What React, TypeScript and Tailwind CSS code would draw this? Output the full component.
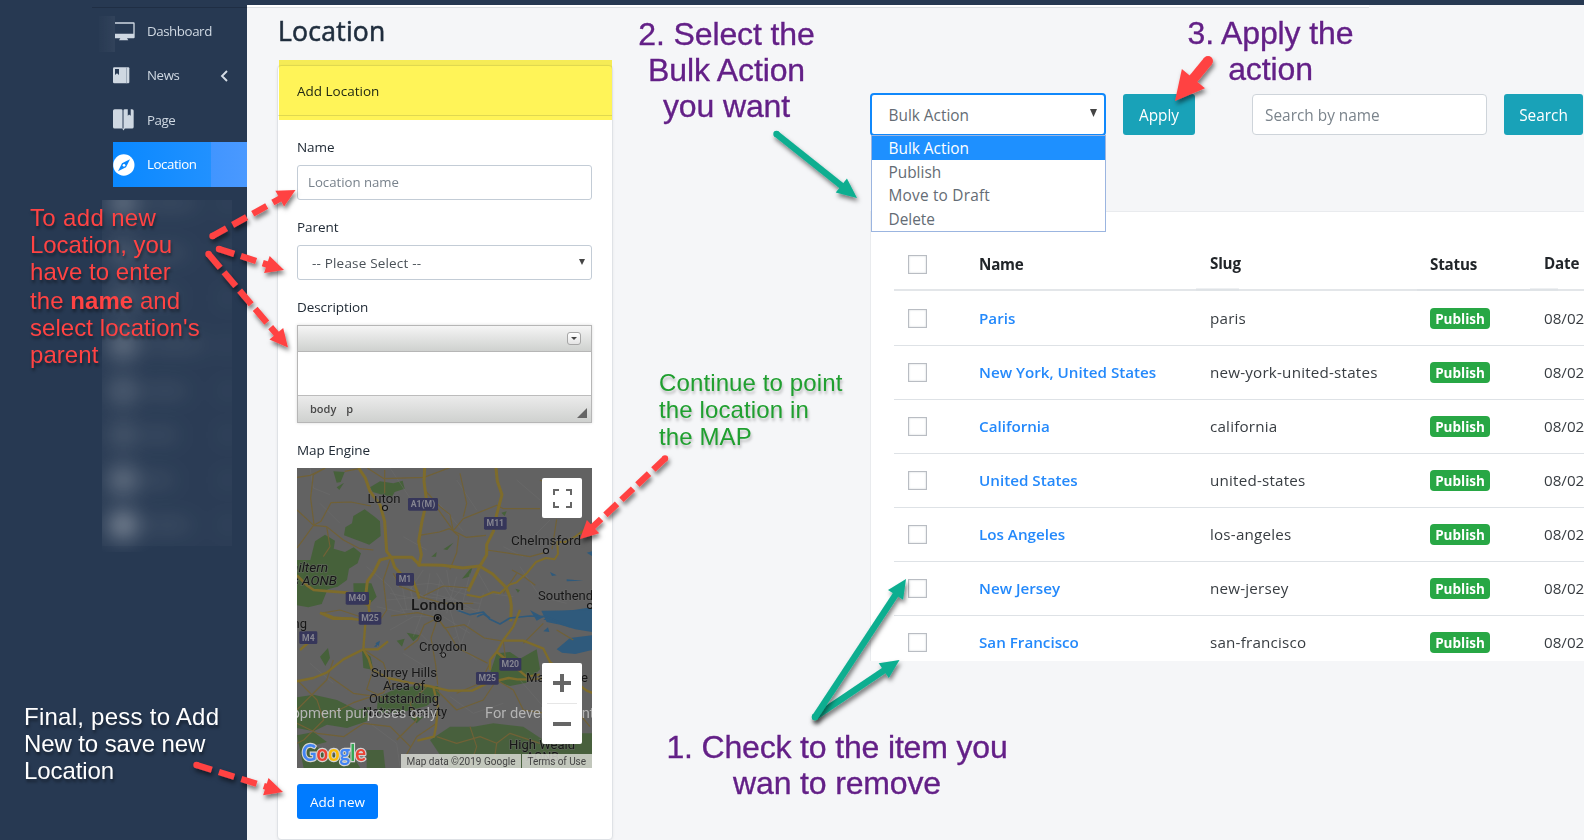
import React from "react";

const rows = [
  ["Paris", "paris"],
  ["New York, United States", "new-york-united-states"],
  ["California", "california"],
  ["United States", "united-states"],
  ["Los Angeles", "los-angeles"],
  ["New Jersey", "new-jersey"],
  ["San Francisco", "san-francisco"],
];

const blobs = [
  [123, 203, 0.26, 60],
  [123, 253, 0.13, 50],
  [123, 298, 0.12, 40],
  [123, 345, 0.26, 70],
  [123, 391, 0.17, 50],
  [123, 435, 0.12, 40],
  [123, 480, 0.26, 36],
  [123, 525, 0.36, 54],
];

type ArrowProps = {
  from: [number, number];
  to: [number, number];
  color: string;
  width?: number;
  dash?: string;
  head?: number;
  spread?: number;
};

function Arrow({ from, to, color, width = 6.4, dash, head = 18, spread = 9 }: ArrowProps) {
  const dx = to[0] - from[0];
  const dy = to[1] - from[1];
  const len = Math.hypot(dx, dy);
  const ux = dx / len;
  const uy = dy / len;
  const bx = to[0] - ux * head;
  const by = to[1] - uy * head;
  const ex = bx + ux * 3;
  const ey = by + uy * 3;
  return (
    <g filter="url(#drop)">
      <circle cx={from[0]} cy={from[1]} r={width / 2} fill={color} />
      <line x1={from[0]} y1={from[1]} x2={ex} y2={ey} stroke={color} strokeWidth={width} strokeDasharray={dash} />
      <polygon
        fill={color}
        points={`${to[0]},${to[1]} ${bx - uy * spread},${by + ux * spread} ${bx + uy * spread},${by - ux * spread}`}
      />
    </g>
  );
}

function Badge({ x, y, w, t }: { x: number; y: number; w: number; t: string }) {
  return (
    <g>
      <rect x={x} y={y} width={w} height={38} rx={4} fill="#36365a" />
      <text x={x + w / 2} y={y + 28} textAnchor="middle" fontSize={26} fontWeight={700} fill="#858590">
        {t}
      </text>
    </g>
  );
}

function MapView() {
  return (
    <svg className="block h-[300px] w-[295px]" viewBox="0 0 295 300" fontFamily="Roboto, sans-serif">
      <rect width="295" height="300" fill="#626262" />
      {/* north half */}
      <g transform="translate(-7 -8) scale(.33333)" fill="none" strokeLinejoin="round">
        <g fill="#46613a">
          <path d="M240 82l30-18 40 6 28-8 6 24-30 10-8 14-24-4-34-10z" />
          <path d="M190 168l34-20 30 22 16 14 2 44-34 26-44-16-32-12 4-24 20-12z" />
          <path d="M21 300l40 0 14-56 30-20 30 18-4 24 34 10 26-14 22 18-10 30-26 16-6 34-28 20-30 8-18 44-40 10-34-6z" />
          <path d="M190 370l54 0 16 40-24 24-44-6z M130 34l34 2-12 30-12 2z M140 82l22-14-14 22z M460 268l30-20-18 22z M424 290l16-14-2 14z M516 356l34-40-12 34z M634 158l16-4-6 14z M676 386l14 4-6 8z" />
        </g>
        <g fill="#2f5a7c">
          <path d="M760 480l30-24 60-6 56-8v38z M780 336l20 10-14 2z M830 358l50 4-50 2z M890 278l16-4v14z" />
          <path d="M560 470l20-8 20 12" stroke="#2f5a7c" strokeWidth="5" fill="none" />
        </g>
        <g stroke="#6e6e6e" strokeWidth="1.5">
          <path d="M60 24l10 60 50 20 M300 24l60 90 90 20 70 80 M230 320l70 60 50 90 M400 330l-40 60 20 60 M440 340l60 100 M470 330l10 60 70 20 M520 380l-60 70 M560 330l40 70 70 10 M690 320l60 90 80 20 M780 180l-60 60 M640 260l60 30 M90 130l60 60 M340 230l70 40 M300 400l90 20 M480 410l90 50 M260 440l90 20 M310 350l120 80 M420 400l80 20 M680 60l70 60 M500 60l60 90" />
          <path d="M330 340l20 110 M360 340l10 120 M420 340l-20 110 M450 360l-20 110 M500 350l-30 110 M540 340l-30 120 M580 400l-20 70 M290 420l120-10 160 20 M320 380l100-10 120 20 M330 450l120-10 120 10" />
        </g>
        <g stroke="#716136" strokeWidth="3.5">
          <path d="M21 52l40-6 40-20 M164 34l44-8 M21 150l50 46 22-12 30-56 60-2 60 12 M70 196l40 4 50 40 50 26 40 4 M106 24l-36 20-8 70 10 80-36 50-15 20 M232 24l50 32 120-4 80-30 M284 30l0 70 M404 90l46 50 30 24 10 50 16 14-6 50-20 50 M490 212l30-36 100-40 20 10 110 0 M388 226l60-10 30-10 50 26 60-6 M590 270l70 10 60 10 44-12 M666 330l30 16 40 30 M750 60l46 22-10 30 M800 178l-14 90 M856 230l50-30 M390 400l-60-20-20-40 M400 408l60-30 80 6 M390 410l70 20 90 0 M300 300l-20 60 10 90-20 30 M90 460l60-10 90 30 M110 200l10 60-20 30 M490 212l-50-70 M510 40l20 90-10 40 M640 400l40-60" />
        </g>
        <g stroke="#7e6c2b" strokeWidth="9">
          <path d="M206 24l20 30 14 40 30 40 14 50 6 90 14 18 10 30 24 26" />
          <path d="M404 24l-2 40 8 60-14 60-10 60 8 40-8 36" />
          <path d="M618 24l4 40 14 40-16 60-10 50-20 40 0 30-20 34-36 76" />
          <path d="M228 400l4-36 20-28 18-36 30-8 66 0 22 22 70 2 60 8 50-6 40 24 40 40 12 30 4 26-2 46" />
          <path d="M21 346l30 30 20 14 50 4 50 4 40 28 26 10" strokeWidth="8" />
          <path d="M364 350l16 40 8 26" strokeWidth="8" />
          <path d="M530 404l40 8 40-16 20 4 28-26 20-6 34-30 26-32 30-12 26 4 10-16-2-36 24 0 30-16 40-30" strokeWidth="6" />
          <path d="M90 458l40 18 60 0" strokeWidth="8" />
          <path d="M240 420l-4 20 6 40" strokeWidth="8" />
        </g>
        <Badge x={354} y={114} w={90} t="A1(M)" />
        <Badge x={582} y={171} w={68} t="M11" />
        <Badge x={318} y={339} w={54} t="M1" />
        <Badge x={167} y={396} w={70} t="M40" />
      </g>
      {/* south half */}
      <g transform="translate(-7 142) scale(.33333)" fill="none" strokeLinejoin="round">
        <g fill="#46613a">
          <path d="M90 140l24-26 6 30-14 24z M216 120l26 20 8 40-30-6z M320 92l24-6-8 24z M350 68l40 8-20 18z M600 190l20-60 40-4 30 20 50-28 10 60-40 40-50 10-60-20z" />
          <path d="M264 262l50-24 60-10 70 0 6 30-40 30-80 20-70 0z M360 320l40 0-20 20z" />
          <path d="M21 262l50-8 70 16 60 30 40-10-10 44-60 20-60-10-40 20-50-10z M21 376l50-10 40 30-40 10 50 30 60-10 30 48-170 0z" />
          <path d="M420 390l60-40 70 0 60-10 90 10 60 40 100-20 46 0 0 104-430 0z M230 420l50 0 6 54-56 0z" opacity=".9" />
        </g>
        <g fill="#2f5a7c">
          <path d="M906 0v66l-50-8-46-14-40-8-16-34z M720 0l40 22-20 10z" />
          <path d="M800 118l40-34 66-8v44l-50 12-40-4z M760 64l14-12 4 14z M256 100l14-8-4 16z M252 110l12-12-4 12z" />
          <path d="M500 0l40 14 40-8 20 22 30 14 30-18 60-6 50 2 70 30" stroke="#2f5a7c" strokeWidth="5" fill="none" />
        </g>
        <g stroke="#6d6d6d" strokeWidth="1.5">
          <path d="M300 60l70-40 90 0 80 50 M380 60l60 60 60-40 M400 0l-30 80 M480 0l30 100-60 40 M540 30l-30 80 50 40 M60 160l70 60 M240 340l80 60 10 70 M480 260l70 50 90-30 M690 210l70 80 M340 130l100 60" />
        </g>
        <g stroke="#716136" strokeWidth="3.5">
          <path d="M443 24l-40 20-20 46-40 30 M443 24l20 30 60-10 60 40 60 10 M443 24l-60-16-80 10 M443 24l30 40 30 50 90 46 M443 24l-20 60 14 80 6 60 M220 118l60 40 20 60-20 30-90 30-60 30 M220 118l30 60-20 60 60 30 M21 210l60 60 20 60-60 60-20 10 M120 200l70 50 70 10 M410 230l-50 50 20 50-60 60 M440 240l60 60 80-30 40-60 50 30 30 60 70 10 60-30 M600 160l-30 60-70 30 M440 340l-60 40-40 70 M440 380l60 20 70-20 50 20 40-30 90 30 M540 350l20 60-20 60 M620 400l-10 70 M860 240l-10 50 50 60 M320 220l-40 20 M21 340l60 30 80 10 60-40 80 10 60 60 M130 150l-20 60-90 90 M800 60l50 30 M700 100l60-60 M640 94l10 80" />
        </g>
        <g stroke="#7e6c2b" strokeWidth="9">
          <path d="M100 10l30 12 70 6 50 10" strokeWidth="7" />
          <path d="M226 40l-6 78-60 30-50 40-40 16-50 10 M220 118l44 0 30-24 M30 120l50-44" strokeWidth="7" />
          <path d="M220 118l16 28 10 34 50 24 60 14 60 10 60 14 70 0 50-24 60-14 26 4 40 0 100-8" strokeWidth="7" />
          <path d="M690 0l-20 50-30 40-20 36-20 24 0 30 M640 92l60 0 60 24 20 40 50 40 60 46 20 8 M430 230l14 60-6 60-6 30-50 12 M620 126l30 24 60 50 40-6" strokeWidth="7" />
        </g>
        <Badge x={206} y={6} w={68} t="M25" />
        <Badge x={28} y={64} w={54} t="M4" />
        <Badge x={628} y={144} w={66} t="M20" />
        <Badge x={558} y={186} w={68} t="M25" />
        <g stroke="#111" strokeWidth="4">
          <circle cx="443" cy="24" r="10" fill="#777" />
          <circle cx="443" cy="24" r="4" fill="#111" />
          <circle cx="460" cy="135" r="7" strokeWidth="3" fill="#777" />
        </g>
      </g>
      <g fill="#171717" fontSize="13.3" stroke="#6a6a6a" strokeWidth="1.4" paintOrder="stroke" strokeOpacity=".6">
        <text x="70.5" y="35" textLength="33" lengthAdjust="spacingAndGlyphs">Luton</text>
        <text x="214" y="76.5" textLength="70" lengthAdjust="spacingAndGlyphs">Chelmsford</text>
        <text x="-14.5" y="104" textLength="45.5" fontStyle="italic" fontSize="12.500" lengthAdjust="spacingAndGlyphs">Chiltern</text>
        <text x="-24" y="117" textLength="64" fontStyle="italic" fontSize="12.500" lengthAdjust="spacingAndGlyphs">Hills AONB</text>
        <text x="241" y="131.5" fontSize="13">Southend</text>
        <text x="114" y="142" fontSize="15.5" fontWeight="500" textLength="53" lengthAdjust="spacingAndGlyphs">London</text>
        <text x="-37" y="160" fontSize="13">Reading</text>
        <text x="122" y="183" textLength="48" lengthAdjust="spacingAndGlyphs">Croydon</text>
        <text x="74" y="208.5" textLength="66" lengthAdjust="spacingAndGlyphs">Surrey Hills</text>
        <text x="86" y="221.5" textLength="42" lengthAdjust="spacingAndGlyphs">Area of</text>
        <text x="72" y="235" textLength="70" lengthAdjust="spacingAndGlyphs">Outstanding</text>
        <text x="66" y="248" textLength="84" lengthAdjust="spacingAndGlyphs">Natural Beauty</text>
        <text x="229" y="213.5" textLength="62" lengthAdjust="spacingAndGlyphs">Maidstone</text>
        <text x="212" y="281" textLength="66" lengthAdjust="spacingAndGlyphs">High Weald</text>
        <text x="229" y="293" textLength="33" lengthAdjust="spacingAndGlyphs">AONB</text>
      </g>
      <g fill="#777" stroke="#111" strokeWidth="1.1">
        <circle cx="88" cy="40" r="2.5" />
        <circle cx="249" cy="83" r="2.5" />
        <circle cx="293" cy="138" r="2.5" />
      </g>
      <g fill="#b4b4b4" fontSize="14.500">
        <text x="-65" y="250" textLength="205" lengthAdjust="spacingAndGlyphs">For development purposes only</text>
        <text x="188" y="250" textLength="205" lengthAdjust="spacingAndGlyphs">For development purposes only</text>
      </g>
      <text x="5" y="293" fontFamily="Lato, sans-serif" fontSize="22.500" fontWeight="700" textLength="64" lengthAdjust="spacingAndGlyphs" stroke="#d4d4d4" strokeWidth="2.4" paintOrder="stroke">
        <tspan fill="#4285f4">G</tspan>
        <tspan fill="#ea4335">o</tspan>
        <tspan fill="#fbbc05">o</tspan>
        <tspan fill="#4285f4">g</tspan>
        <tspan fill="#34a853">l</tspan>
        <tspan fill="#ea4335">e</tspan>
      </text>
      <rect x="104" y="286" width="120" height="14" fill="#d6d8d2" opacity=".86" />
      <rect x="225" y="286" width="70" height="14" fill="#d6d8d2" opacity=".86" />
      <g fill="#444" fontSize="10">
        <text x="109.5" y="296.5" textLength="109" lengthAdjust="spacing">Map data ©2019 Google</text>
        <text x="230.5" y="296.5" textLength="58.5" lengthAdjust="spacing">Terms of Use</text>
      </g>
      <rect x="245" y="10" width="40" height="40" rx="2" fill="#fff" />
      <path d="M257 27v-5h5 M269 22h5v5 M274 34v5h-5 M262 39h-5v-5" fill="none" stroke="#666" strokeWidth="2" />
      <rect x="245" y="195" width="40" height="81" rx="2" fill="#fff" />
      <path d="M256 215h18 M265 206v18 M256 256h18" stroke="#666" strokeWidth="4" />
      <path d="M250 235.5h30" stroke="#e6e6e6" />
    </svg>
  );
}

function NavItem({ icon, label, active, chevron }: { icon: React.ReactNode; label: string; active?: boolean; chevron?: boolean }) {
  return (
    <div
      className={
        active
          ? "flex h-[45px] items-center bg-[linear-gradient(90deg,#0988ff_0%,#2191ff_73%,#4195ff_73%,#4a99ff_100%)] text-white"
          : "flex h-[44.4px] items-center text-[#cfd8e2]"
      }
    >
      <div className="w-[34px] shrink-0">{icon}</div>
      <span className="pt-px text-[13.3px] tracking-[-0.42px]">{label}</span>
      {chevron && (
        <svg className="mr-[19px] ml-auto h-[12px] w-[8px]" viewBox="0 0 8 12" fill="none" stroke="#d5dde6" strokeWidth="1.9">
          <path d="M7 1L2 6l5 5" />
        </svg>
      )}
    </div>
  );
}

function Label({ children }: { children: React.ReactNode }) {
  return <div className="mb-[7px] h-[21px] text-[13.5px] leading-[21px] tracking-[-0.07px] text-[#212b36]">{children}</div>;
}

function Check() {
  return <div className="ml-[14px] h-[19px] w-[19px] border border-[#b9bdc3] bg-white shadow-[inset_0_0_2px_#c8ccd0]" />;
}

export default function App() {
  return (
    <div className="relative flex h-[840px] w-[1584px] flex-col overflow-hidden bg-[#273952] font-['Open_Sans',sans-serif]">
      <div className="h-[5px] shrink-0" />
      <div className="flex min-h-0 flex-1">
        <aside className="w-[247px] shrink-0 pl-[92px]">
          <div className="mt-[2px] mb-px border-t border-[#1f2e44]" />
          <nav className="ml-[21px]">
            <NavItem
              label="Dashboard"
              icon={
                <svg className="h-[20px] w-[22px]" viewBox="339 62 66 60">
                  <path fill="#cfd8e2" fillRule="evenodd" d="M345 66h56q3 0 3 3v42q0 3-3 3h-56zM345 70v30h55v-30zM361 114h20l4 6h-28z" />
                </svg>
              }
            />
            <NavItem
              label="News"
              chevron
              icon={
                <svg className="h-[17px] w-[17px]" viewBox="339 203 51 51">
                  <path fill="#cfd8e2" d="M343 204h42q3 0 3 3v42q0 3-3 3h-42q-4 0-4-4v-40q0-4 4-4z" />
                  <path fill="#273952" d="M345 209h12v18l-6-5-6 5z" />
                  <path stroke="#8492a5" strokeWidth="2" d="M379.500 204v48" />
                </svg>
              }
            />
            <NavItem
              label="Page"
              icon={
                <svg className="h-[22px] w-[21px]" viewBox="339 327 64 66">
                  <path fill="#cfd8e2" d="M344 327h20q4 0 4 4v55h-24q-5 0-5-5v-49q0-5 5-5zM371 331q0-4 4-4h9v20l4-4 5 4v-20h4q5 0 5 5v49q0 5-5 5h-22l-4 6-4-6h4z" />
                </svg>
              }
            />
            <NavItem
              label="Location"
              active
              icon={
                <svg className="h-[22px] w-[22px]" viewBox="339 462 66 66">
                  <circle cx="371.500" cy="495" r="32" fill="#fff" />
                  <path fill="#0b88ff" d="M390 478l-12 24-24 12 12-24z" />
                  <circle cx="372" cy="496" r="4" fill="#fff" />
                </svg>
              }
            />
          </nav>
        </aside>

        <main className="flex min-w-0 flex-1 flex-col bg-[#f5f6f8]">
          <div className="h-[3px] w-[1122px] shrink-0 border-b border-[#dde0e4] bg-white" />
          <div className="flex min-h-0 flex-1">
            <section className="ml-[30px] w-[336px] shrink-0">
              <h1 className="h-[57px] pt-[4px] pl-px text-[26.500px] leading-[39px] font-medium tracking-[0.25px] text-[#1f2d3d] [-webkit-text-stroke:0.6px_#1f2d3d]">Location</h1>
              <div className="relative h-[775px] rounded-[4px] border border-[#dfe2e6] bg-white shadow-[0_1px_3px_rgba(0,0,0,0.06)]">
                <div className="flex h-[50px] items-center border-b border-[#dfe2e6] pt-px pl-[19px] text-[13.500px] text-[#212b36]">Add Location</div>
                <div className="absolute top-[-6px] left-[1px] h-[60px] w-[333px] bg-[#fff458] mix-blend-multiply" />
                <div className="pt-[21px] pr-[20px] pl-[19px]">
                  <Label>Name</Label>
                  <div className="mb-[17px] flex h-[35px] items-center rounded-[3px] border border-[#c3ccd6] px-[10px] pt-px text-[13.200px] text-[#78828c]">Location name</div>
                  <Label>Parent</Label>
                  <div className="mb-[17px] flex h-[35px] items-center justify-between rounded-[3px] border border-[#c3ccd6] pt-px pr-[6px] pl-[14px] text-[13.500px] tracking-[0.18px] text-[#495057]">
                    <span>-- Please Select --</span>
                    <svg className="mb-[3px] h-[6px] w-[6px]" viewBox="0 0 6 6"><path d="M0 0h6L3 6z" fill="#444" /></svg>
                  </div>
                  <Label>Description</Label>
                  <div className="mb-[17px] flex h-[98px] flex-col border border-[#b6b6b6] shadow-[0_0_3px_rgba(0,0,0,0.15)]">
                    <div className="flex h-[26px] items-center justify-end border-b border-[#b6b6b6] bg-linear-to-b from-[#f5f5f5] to-[#cfd1cf] pr-[10px]">
                      <div className="flex h-[13px] w-[14px] items-center justify-center rounded-[3px] border border-[#a6a6a6] bg-linear-to-b from-white to-[#e4e4e4]">
                        <svg className="h-[3px] w-[6px]" viewBox="0 0 6 3"><path d="M0 0h6L3 3z" fill="#444" /></svg>
                      </div>
                    </div>
                    <div className="flex-1 bg-white" />
                    <div className="flex h-[27px] items-center justify-between border-t border-[#bcbcbc] bg-linear-to-b from-[#ebebeb] to-[#cfd1cf] pr-[4px] pl-[12px] text-[11px] font-semibold text-[#484848]">
                      <span className="flex gap-[10px]"><span>body</span><span>p</span></span>
                      <svg className="mt-[8px] h-[10px] w-[10px]" viewBox="0 0 10 10"><path d="M10 0v10H0z" fill="#666" /></svg>
                    </div>
                  </div>
                  <Label>Map Engine</Label>
                  <MapView />
                  <button className="mt-[16px] flex h-[35px] w-[81px] items-center justify-center rounded-[3px] bg-[#007bff] pt-px text-[13.500px] text-white">Add new</button>
                </div>
              </div>
            </section>

            <section className="ml-[257px] flex min-w-0 flex-1 flex-col pt-[85px]">
              <div className="flex h-[43px] shrink-0 items-center text-[15.4px]">
                <div className="relative flex h-[43px] w-[236px] shrink-0 items-center justify-between rounded-[4px] border-2 border-[#1088fb] bg-white pr-[7px] pl-[16.500px] text-[#646c74]">
                  <span className="pt-[3px]">Bulk Action</span>
                  <svg className="mb-[3px] h-[8px] w-[7px]" viewBox="0 0 7 8"><path d="M0 0h7L3.500 8z" fill="#444" /></svg>
                  <div className="absolute top-[40px] left-[-1px] z-10 h-[97px] w-[235px] border border-[#9bb5e0] bg-white leading-[23.500px]">
                    <div className="h-[23.500px] bg-[#1e90ff] pt-px pl-[16.500px] text-white">Bulk Action</div>
                    <div className="h-[23.500px] pt-px pl-[16.500px]">Publish</div>
                    <div className="h-[23.500px] pt-px pl-[16.500px] tracking-[0.2px]">Move to Draft</div>
                    <div className="h-[23.500px] pt-px pl-[16.500px]">Delete</div>
                  </div>
                </div>
                <button className="ml-[17px] h-[41px] w-[72px] shrink-0 rounded-[3px] bg-[#19a2b8] pt-[3px] text-white">Apply</button>
                <div className="ml-[57px] flex h-[41px] w-[235px] shrink-0 items-center rounded-[4px] border border-[#ced4da] bg-white pt-[3px] pl-[12px] text-[#7b848c]">Search by name</div>
                <button className="ml-[17px] h-[41px] w-[79px] shrink-0 rounded-[3px] bg-[#19a2b8] pt-[3px] text-white">Search</button>
              </div>
              <div className="mt-[75px] h-[450px] shrink-0 overflow-hidden border-t border-l border-[#e9ebee] bg-white pl-[23px] text-[15.2px]">
                <div className="mb-px grid h-[79px] grid-cols-[85px_231px_220px_114px_60px] items-center border-b-2 border-[#e3e6e9] pt-[27px] font-bold tracking-[-0.2px] text-[#212529]">
                  <Check />
                  <span>Name</span>
                  <span className="pb-[2px]">Slug</span>
                  <span>Status</span>
                  <span className="pb-[2px]">Date</span>
                </div>
                {rows.map(([name, slug]) => (
                  <div key={slug} className="grid h-[54px] grid-cols-[85px_231px_220px_114px_60px] items-center border-b border-[#dee2e6] text-[#383d42]">
                    <Check />
                    <span className="font-semibold whitespace-nowrap text-[#2489fb]">{name}</span>
                    <span className="tracking-[0.2px] whitespace-nowrap">{slug}</span>
                    <span className="flex h-[21px] w-[60px] items-center justify-center rounded-[4px] bg-[#28a745] pt-px text-[13.500px] font-bold text-white">Publish</span>
                    <span className="whitespace-nowrap">08/02/2019</span>
                  </div>
                ))}
              </div>
            </section>
          </div>
        </main>
      </div>

      <svg className="pointer-events-none absolute inset-0 h-[840px] w-[1584px]" viewBox="0 0 1584 840">
        <defs>
          <filter id="drop" x="-30%" y="-30%" width="160%" height="160%">
            <feDropShadow dx="1.500" dy="3.500" stdDeviation="2" floodColor="#000" floodOpacity=".5" />
          </filter>
          <filter id="soft" x="-100%" y="-100%" width="300%" height="300%">
            <feGaussianBlur stdDeviation="10" />
          </filter>
          <clipPath id="veil"><rect x="102" y="200" width="130" height="352" /></clipPath>
          <linearGradient id="patch"><stop offset="0" stopColor="#fff" stopOpacity=".01" /><stop offset="1" stopColor="#fff" stopOpacity=".05" /></linearGradient>
        </defs>
        <rect x="99" y="16" width="16" height="36" fill="url(#patch)" />
        <g clipPath="url(#veil)">
          <rect x="102" y="200" width="130" height="346" fill="#fff" opacity=".02" />
          {blobs.map(([x, y, o, w]) => (
            <g key={y} fill="#fff" filter="url(#soft)">
              <circle cx={x} cy={y} r="15" opacity={o} />
              <ellipse cx={140 + w / 2} cy={y} rx={w / 2} ry="9" opacity=".07" />
              <circle cx="228" cy={y} r="8" opacity=".06" />
            </g>
          ))}
        </g>
        <path d="M1196 289.500h43 M1417 290h113 M1530 289.500h28" stroke="#dee2e6" strokeWidth="2" />
        <Arrow from={[212.5, 236]} to={[295.5, 190]} color="#ff4343" dash="16 7" />
        <Arrow from={[219, 249]} to={[284, 270]} color="#ff4343" dash="16 7" />
        <Arrow from={[208.5, 254]} to={[288, 347.5]} color="#ff4343" dash="18 6" />
        <Arrow from={[196.5, 765]} to={[283, 792]} color="#ff4343" dash="16 7.5" />
        <Arrow from={[665, 458.5]} to={[580, 539]} color="#ff4343" dash="16 6" />
        <Arrow from={[1208, 61]} to={[1175, 101]} color="#ff4343" width={10} head={29} spread={15} />
        <Arrow from={[776.5, 134]} to={[857, 198]} color="#0aae90" head={20} />
        <Arrow from={[815, 717]} to={[899.5, 660]} color="#0aae90" head={19} />
        <Arrow from={[815, 717]} to={[906, 579]} color="#0aae90" head={19} />
      </svg>

      <div className="absolute top-[204px] left-[30px] font-['Liberation_Sans',sans-serif] text-[24px] leading-[27px] tracking-[0.06px] whitespace-pre text-[#ff4343] [text-shadow:1px_3px_3px_rgba(0,0,0,0.4)]">
        <div className="tracking-[0.35px]">To add new</div>
        <div className="tracking-[-0.05px]">Location, you</div>
        <div className="mb-[2px]">have to enter</div>
        <div>the <b>name</b> and</div>
        <div>select location's</div>
        <div>parent</div>
      </div>
      <div className="absolute top-[703px] left-[24px] font-['Liberation_Sans',sans-serif] text-[24px] leading-[27px] whitespace-pre text-white [text-shadow:1px_3px_3px_rgba(0,0,0,0.4)]">
        <div className="tracking-[0.25px]">Final, pess to Add</div>
        <div className="tracking-[-0.1px]">New to save new</div>
        <div className="tracking-[-0.1px]">Location</div>
      </div>
      <div className="absolute top-[369px] left-[659px] font-['Liberation_Sans',sans-serif] text-[24px] leading-[27px] tracking-[0.12px] whitespace-pre text-[#1f9f2f] [text-shadow:1px_3px_3px_rgba(0,0,0,0.25)]">
        {"Continue to point\nthe location in\nthe MAP"}
      </div>
      <div className="absolute top-[16px] left-[626px] w-[201px] text-center font-['Liberation_Sans',sans-serif] text-[32px] leading-[36px] tracking-[-0.12px] whitespace-pre text-[#632087] [-webkit-text-stroke:0.35px_#632087] [text-shadow:0_0_2px_#fff]">
        {"2. Select the\nBulk Action\nyou want"}
      </div>
      <div className="absolute top-[15px] left-[1170px] w-[201px] text-center font-['Liberation_Sans',sans-serif] text-[32px] leading-[36px] tracking-[-0.12px] whitespace-pre text-[#632087] [-webkit-text-stroke:0.35px_#632087] [text-shadow:0_0_2px_#fff]">
        {"3. Apply the\naction"}
      </div>
      <div className="absolute top-[729px] left-[637px] w-[400px] text-center font-['Liberation_Sans',sans-serif] text-[32px] leading-[36px] tracking-[-0.16px] whitespace-pre text-[#632087] [-webkit-text-stroke:0.35px_#632087] [text-shadow:0_0_2px_#fff]">
        {"1. Check to the item you\nwan to remove"}
      </div>
    </div>
  );
}
